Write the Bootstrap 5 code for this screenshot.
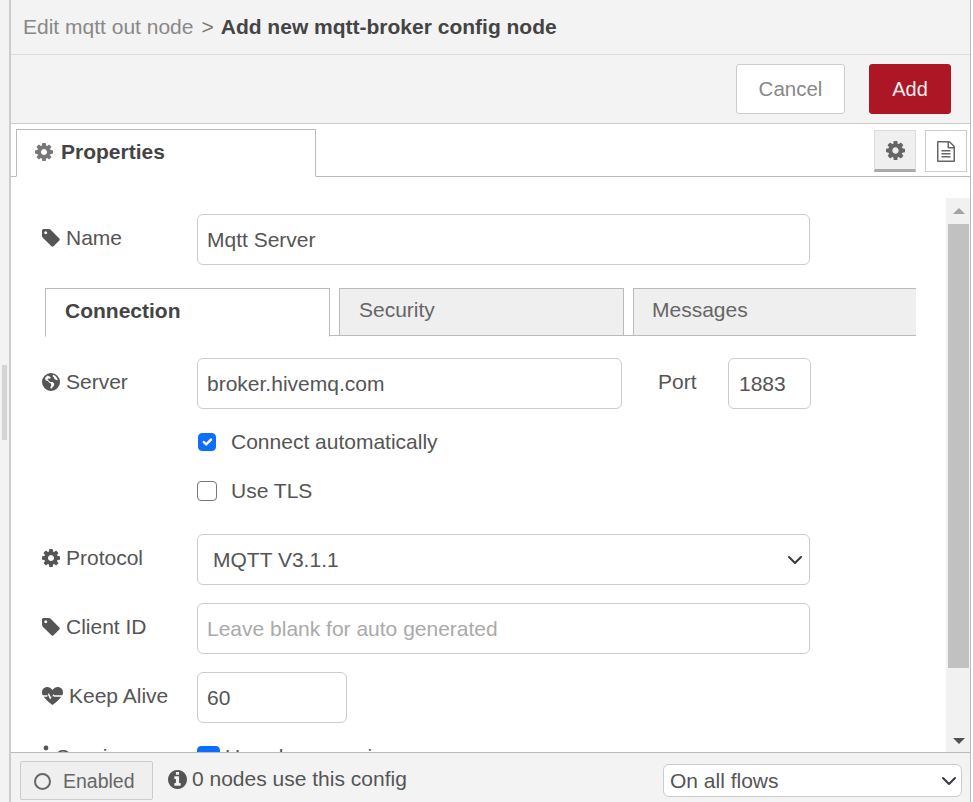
<!DOCTYPE html>
<html lang="en">
<head>
    <meta charset="UTF-8">
    <meta name="viewport" content="width=device-width, initial-scale=1.0">
    <title>Add new mqtt-broker config node</title>
    <link href="https://cdn.jsdelivr.net/npm/bootstrap@5.3.2/dist/css/bootstrap.min.css" rel="stylesheet">
    <style>
        html, body { height: 100%; overflow: hidden; }
        body {
            font-family: "Liberation Sans", Arial, sans-serif;
            font-size: 21px;
            color: #555;
            background: #fff;
        }
        .page-wrap { height: 802px; }
        .side-strip { width: 9px; background: #f3f3f3; flex: none; padding-top: 365px; }
        .side-grip { width: 5px; height: 75px; margin-left: 2px; background: #d4d4d4; }
        .tray { width: 962px; flex: none; border-left: 2px solid #ccc; border-right: 1px solid #bbb; }
        .tray-title { height: 55px; flex: none; background: #f3f3f3; border-bottom: 1px solid #ddd; padding-left: 12px; }
        .crumb { color: #888; }
        .crumb-sep { color: #777; margin: 0 7px 0 8px; }
        .crumb-now { color: #444; font-weight: 700; }
        .tray-toolbar { height: 69px; flex: none; background: #f3f3f3; border-bottom: 1px solid #ccc; padding: 9px 19px 0 0; gap: 24px; }
        .act-btn { height: 50px; border-radius: 3px; font-size: 20.500px; padding: 0; }
        .act-cancel { width: 109px; background: #fff; border: 1px solid #ccc; color: #888; }
        .act-add { width: 82px; background: #ad1625; border: 1px solid #ad1625; color: #eee; font-size: 20px; }
        .tab-head { height: 53px; flex: none; border-bottom: 1px solid #bbb; padding: 5px 3px 0 5px; }
        .main-tab {
            width: 300px; height: 48px; margin-bottom: -1px; background: #fff;
            border: 1px solid #bbb; border-bottom-color: #fff;
            padding: 0 0 2px 18px; gap: 8px; font-weight: 700; color: #444;
        }
        .side-btn { width: 42px; height: 42px; border: 1px solid #ccc; background: #fff; margin-top: 1px; }
        .side-btn.is-on { background: #efefef; border-color: #ddd; border-bottom: 3px solid #aaa; }
        .side-gap { gap: 9px; }
        .tray-body { flex: 1 1 0; min-height: 0; }
        .form-area { padding: 37px 0 0 30px; width: 935px; flex: none; overflow: hidden; }
        .form-line { margin-bottom: 18px; }
        .field-label { width: 156px; flex: none; height: 51px; padding-bottom: 4px; gap: 6px; color: #555; }
        .field-label svg { margin-left: 1px; }
        .field-input.form-control, .field-input.form-select {
            height: 51px; font-size: 21px; color: #555; border-color: #ccc; border-radius: 6px;
            padding: 4px 9px; box-shadow: none;
        }
        .field-input.form-select { padding-left: 15px; background-size: 20px 16px; background-position: right 4px center; }
        .field-input::placeholder { color: #aaa; opacity: 1; }
        .w-name { width: 613px; }
        .w-server { width: 425px; }
        .field-input.form-control.w-port { width: 83px; padding-left: 10px; }
        .w-alive { width: 150px; }
        .port-label { width: 106px; padding-left: 36px; height: 51px; padding-bottom: 4px; }
        .sub-tabs { margin: 23px 0 22px 4px; width: 871px; border-bottom: 1px solid #bbb; height: 48px; gap: 9px; }
        .sub-tab {
            width: 285px; height: 48px; background: #efefef; border: 1px solid #bbb;
            padding: 0 0 4px 19px; color: #666;
        }
        .sub-tab.is-on { background: #fff; border-bottom-color: #fff; font-weight: 700; color: #444; margin-bottom: -1px; height: 49px; }
        .sub-tab.is-last { width: 283px; border-right: 0; padding-left: 18px; }
        .check-line { padding-left: 156px; height: 30px; gap: 14px; }
        .check-line .form-check-input { width: 20px; height: 20px; margin: 0; border-color: #777; border-radius: 4px; flex: none; }
        .check-line .form-check-input:checked { border-color: #0d6efd; width: 18px; height: 18px; margin: 0 1px; }
        .chk-gap { margin-top: 19px; }
        .proto-line { margin-top: 28px; }
        .session-line { height: 32px; }
        .session-label { height: 32px; }
        .session-box.form-check-input { width: 23px; height: 23px; margin: 5px 5px 0 0; flex: none; border-radius: 4px; }
        .scroll-col { width: 24px; flex: none; margin-top: 21px; background: #f1f1f1; padding: 0 1px 0 2px; }
        .scroll-up { height: 26px; flex: none; }
        .scroll-thumb { height: 444px; flex: none; background: #c1c1c1; }
        .tri-up, .tri-down { width: 0; height: 0; border-left: 6px solid transparent; border-right: 6px solid transparent; }
        .tri-up { border-bottom: 6px solid #a3a3a3; }
        .tri-down { border-top: 6px solid #505050; }
        .tray-foot { height: 50px; flex: none; background: #f3f3f3; border-top: 1px solid #bbb; padding: 8px 8px 0 9px; }
        .enabled-btn {
            width: 133px; height: 39px; background: #efefef; border: 1px solid #ccc; border-radius: 2px;
            font-size: 19.500px; color: #666; padding: 2px 0 0 13px; gap: 12px;
        }
        .enabled-dot { width: 17px; height: 17px; border: 2px solid #666; border-radius: 50%; flex: none; }
        .usage-note { margin-left: 15px; gap: 5px; color: #555; height: 36px; }
        .flow-select.form-select {
            width: 299px; height: 33px; margin: 3px 0 0 auto; font-size: 21px; color: #555;
            padding: 0 6px; border-color: #ccc; border-radius: 6px;
            background-size: 20px 16px; background-position: right 2px center;
        }
    </style>
</head>
<body>
    <svg width="0" height="0" class="d-none">
        <symbol id="ic-cog" viewBox="128 128 1536 1536"><path d="M1152 896q0-106-75-181t-181-75-181 75-75 181 75 181 181 75 181-75 75-181zm512-109v222q0 12-8 23t-20 13l-185 28q-19 54-39 91 35 50 107 138 10 12 10 25t-9 23q-27 37-99 108t-94 71q-12 0-26-9l-138-108q-44 23-91 38-16 136-29 186-7 28-36 28h-222q-14 0-24.5-8.5t-11.5-21.5l-28-184q-49-16-90-37l-141 107q-10 9-25 9-14 0-25-11-126-114-165-168-7-10-7-23 0-12 8-23 15-21 51-66.5t54-70.5q-27-50-41-99l-183-27q-13-2-21-12.5t-8-23.5v-222q0-12 8-23t19-13l186-28q14-46 39-92-40-57-107-138-10-12-10-24 0-10 9-23 26-36 98.5-107.5t94.5-71.5q13 0 26 10l138 107q44-23 91-38 16-136 29-186 7-28 36-28h222q14 0 24.5 8.5t11.5 21.5l28 184q49 16 90 37l142-107q9-9 24-9 13 0 25 10 129 119 165 170 7 8 7 22 0 12-8 23-15 21-51 66.5t-54 70.5q26 50 41 98l183 28q13 2 21 12.5t8 23.5z"/></symbol>
        <symbol id="ic-tag" viewBox="128 128 1536 1536"><path d="M576 448q0-53-37.5-90.5t-90.5-37.5-90.5 37.5-37.5 90.5 37.5 90.5 90.5 37.5 90.5-37.5 37.5-90.5zm1067 576q0 53-37 90l-491 492q-39 37-91 37-53 0-90-37l-715-716q-38-37-64.5-101t-26.5-117v-416q0-52 38-90t90-38h416q53 0 117 26.5t102 64.5l715 714q37 39 37 91z"/></symbol>
        <symbol id="ic-info" viewBox="128 128 1536 1536"><path d="M1152 1376v-160q0-14-9-23t-23-9h-96v-512q0-14-9-23t-23-9h-320q-14 0-23 9t-9 23v160q0 14 9 23t23 9h96v320h-96q-14 0-23 9t-9 23v160q0 14 9 23t23 9h448q14 0 23-9t9-23zm-128-896v-160q0-14-9-23t-23-9h-192q-14 0-23 9t-9 23v160q0 14 9 23t23 9h192q14 0 23-9t9-23zm640 416q0 209-103 385.5t-279.5 279.5-385.5 103-385.5-103-279.5-279.5-103-385.5 103-385.5 279.5-279.5 385.5-103 385.5 103 279.5 279.5 103 385.5z"/></symbol>
        <symbol id="ic-file" viewBox="128 0 1536 1792"><path d="M1596 380q28 28 48 76t20 88v1152q0 40-28 68t-68 28h-1344q-40 0-68-28t-28-68v-1600q0-40 28-68t68-28h896q40 0 88 20t76 48zm-444-244v376h376q-10-29-22-41l-313-313q-12-12-41-22zm384 1528v-1024h-416q-40 0-68-28t-28-68v-416h-768v1536h1280zm-1024-864q0-14 9-23t23-9h704q14 0 23 9t9 23v64q0 14-9 23t-23 9h-704q-14 0-23-9t-9-23v-64zm736 224q14 0 23 9t9 23v64q0 14-9 23t-23 9h-704q-14 0-23-9t-9-23v-64q0-14 9-23t23-9h704zm0 256q14 0 23 9t9 23v64q0 14-9 23t-23 9h-704q-14 0-23-9t-9-23v-64q0-14 9-23t23-9h704z"/></symbol>
        <symbol id="ic-globe" viewBox="0 0 18 18"><path fill-rule="evenodd" d="M9 0a9 9 0 1 1 0 18A9 9 0 0 1 9 0zM5.500 2.600 3 5l.6 2.200 2.600 1 1 1.600 1.800.6.2 2.200-1 2.200 1 .9 2.600-2.600.5-2.400-1.800-1.600-2.600-.2-1-1.300L5.600 7l.4-1.400 2 .2.8-1.300L7.500 3.600zM11 1.700l-.4 1.500 1.200 1 .6 1.800 2.600 1.200.8-.2A7.600 7.600 0 0 0 11 1.700z"/></symbol>
        <symbol id="ic-pulse" viewBox="0 0 21 18"><path fill-rule="evenodd" d="M10.500 3C9 .9 7.200 0 5.300 0 2.200 0 0 2.400 0 5.400c0 1 .3 2 .7 2.800h5l1.200-2.200 2.300 5 2.200-3.800.9 1h8c.4-.8.7-1.800.7-2.800C21 2.400 18.800 0 15.700 0c-1.900 0-3.700.9-5.200 3zM1.800 9.700C3.500 12.300 7 15.500 10.500 18c3.500-2.500 7-5.700 8.700-8.300H12l-1.500-1.500-2.400 4.200-2.200-4.800-.7 2.100z"/></symbol>
        <symbol id="ic-dot" viewBox="0 0 8 20"><circle cx="4" cy="3" r="2.400"/><rect x="2" y="7" width="4" height="11"/></symbol>
    </svg>

    <div class="page-wrap d-flex">
        <div class="side-strip"><div class="side-grip"></div></div>

        <div class="tray d-flex flex-column">
            <div class="tray-title d-flex align-items-center">
                <span class="crumb">Edit mqtt out node</span>
                <span class="crumb-sep">&gt;</span>
                <span class="crumb-now">Add new mqtt-broker config node</span>
            </div>

            <div class="tray-toolbar d-flex justify-content-end align-items-start">
                <button type="button" class="btn act-btn act-cancel">Cancel</button>
                <button type="button" class="btn act-btn act-add">Add</button>
            </div>

            <div class="tab-head d-flex justify-content-between align-items-start">
                <div class="main-tab d-flex align-items-center">
                    <svg width="18" height="18" fill="#777"><use href="#ic-cog"/></svg>
                    <span>Properties</span>
                </div>
                <div class="d-flex side-gap">
                    <div class="side-btn is-on d-flex align-items-center justify-content-center">
                        <svg width="19" height="19" fill="#666"><use href="#ic-cog"/></svg>
                    </div>
                    <div class="side-btn d-flex align-items-center justify-content-center">
                        <svg width="18" height="21" fill="#666"><use href="#ic-file"/></svg>
                    </div>
                </div>
            </div>

            <div class="tray-body d-flex overflow-hidden">
                <div class="form-area">
                    <div class="d-flex align-items-center">
                        <label class="field-label d-flex align-items-center">
                            <svg width="18" height="18" fill="#555"><use href="#ic-tag"/></svg>Name
                        </label>
                        <input type="text" class="form-control field-input w-name" value="Mqtt Server">
                    </div>

                    <div class="sub-tabs d-flex">
                        <div class="sub-tab is-on d-flex align-items-center">Connection</div>
                        <div class="sub-tab d-flex align-items-center">Security</div>
                        <div class="sub-tab is-last d-flex align-items-center">Messages</div>
                    </div>

                    <div class="d-flex align-items-center form-line">
                        <label class="field-label d-flex align-items-center">
                            <svg width="18" height="18" fill="#555"><use href="#ic-globe"/></svg>Server
                        </label>
                        <input type="text" class="form-control field-input w-server" value="broker.hivemq.com">
                        <span class="port-label d-flex align-items-center">Port</span>
                        <input type="text" class="form-control field-input w-port" value="1883">
                    </div>

                    <div class="check-line d-flex align-items-center">
                        <input class="form-check-input" type="checkbox" checked>
                        <span>Connect automatically</span>
                    </div>
                    <div class="check-line d-flex align-items-center chk-gap">
                        <input class="form-check-input" type="checkbox">
                        <span>Use TLS</span>
                    </div>

                    <div class="d-flex align-items-center form-line proto-line">
                        <label class="field-label d-flex align-items-center">
                            <svg width="18" height="18" fill="#555"><use href="#ic-cog"/></svg>Protocol
                        </label>
                        <select class="form-select field-input w-name">
                            <option>MQTT V3.1.1</option>
                        </select>
                    </div>

                    <div class="d-flex align-items-center form-line">
                        <label class="field-label d-flex align-items-center">
                            <svg width="18" height="18" fill="#555"><use href="#ic-tag"/></svg>Client ID
                        </label>
                        <input type="text" class="form-control field-input w-name" placeholder="Leave blank for auto generated">
                    </div>

                    <div class="d-flex align-items-center form-line">
                        <label class="field-label d-flex align-items-center">
                            <svg width="21" height="18" fill="#555"><use href="#ic-pulse"/></svg>Keep Alive
                        </label>
                        <input type="text" class="form-control field-input w-alive" value="60">
                    </div>

                    <div class="d-flex align-items-start session-line">
                        <label class="field-label session-label d-flex align-items-start">
                            <svg width="8" height="20" fill="#555" class="mt-1"><use href="#ic-dot"/></svg>Session
                        </label>
                        <input class="form-check-input session-box" type="checkbox" checked>
                        <span>Use clean session</span>
                    </div>
                </div>

                <div class="scroll-col d-flex flex-column">
                    <div class="scroll-up d-flex align-items-center justify-content-center"><div class="tri-up"></div></div>
                    <div class="scroll-thumb"></div>
                    <div class="flex-grow-1 d-flex align-items-end justify-content-center pb-2"><div class="tri-down"></div></div>
                </div>
            </div>

            <div class="tray-foot d-flex align-items-start">
                <button type="button" class="btn enabled-btn d-flex align-items-center">
                    <span class="enabled-dot"></span>Enabled
                </button>
                <div class="usage-note d-flex align-items-center">
                    <svg width="19" height="19" fill="#555"><use href="#ic-info"/></svg>
                    <span>0 nodes use this config</span>
                </div>
                <select class="form-select flow-select">
                    <option>On all flows</option>
                </select>
            </div>
        </div>
    </div>
</body>
</html>
